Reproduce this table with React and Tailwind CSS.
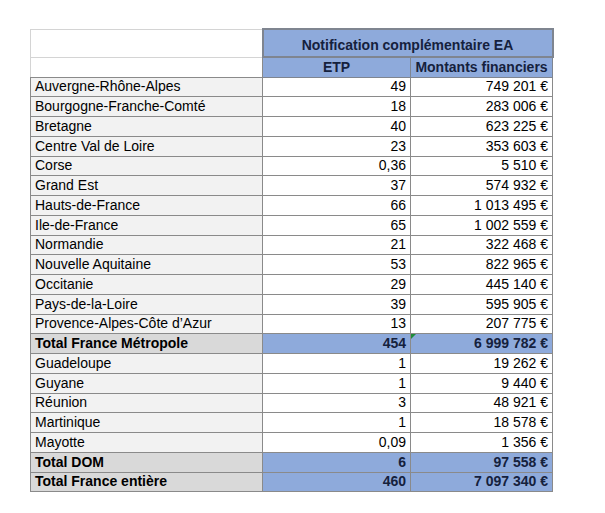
const ROWS = [
  ['Auvergne-Rhône-Alpes', '49', '749 201 €'],
  ['Bourgogne-Franche-Comté', '18', '283 006 €'],
  ['Bretagne', '40', '623 225 €'],
  ['Centre Val de Loire', '23', '353 603 €'],
  ['Corse', '0,36', '5 510 €'],
  ['Grand Est', '37', '574 932 €'],
  ['Hauts-de-France', '66', '1 013 495 €'],
  ['Ile-de-France', '65', '1 002 559 €'],
  ['Normandie', '21', '322 468 €'],
  ['Nouvelle Aquitaine', '53', '822 965 €'],
  ['Occitanie', '29', '445 140 €'],
  ['Pays-de-la-Loire', '39', '595 905 €'],
  ['Provence-Alpes-Côte d’Azur', '13', '207 775 €'],
  ['Total France Métropole', '454', '6 999 782 €', true],
  ['Guadeloupe', '1', '19 262 €'],
  ['Guyane', '1', '9 440 €'],
  ['Réunion', '3', '48 921 €'],
  ['Martinique', '1', '18 578 €'],
  ['Mayotte', '0,09', '1 356 €'],
  ['Total DOM', '6', '97 558 €', true],
  ['Total France entière', '460', '7 097 340 €', true],
];

export default function App() {
  return (
    <div className="w-[605px] h-[513px] bg-white pt-[28px] pl-[30px] font-['Liberation_Sans',Arial,sans-serif] text-[14px] text-black">
      <table className="border-collapse table-fixed w-[522px]">
        <colgroup>
          <col className="w-[232px]" />
          <col className="w-[148px]" />
          <col className="w-[142px]" />
        </colgroup>
        <thead>
          <tr className="h-[25px]">
            <td className="border border-[#d4d4d4] border-r-[#8a8a8a] bg-white" />
            <td colSpan={2} className="border-2 border-[#7f8590] bg-[#8eaadb] text-center font-bold text-[#15213d] pt-[5px]">
              Notification complémentaire EA
            </td>
          </tr>
          <tr className="h-[20px] leading-[18px]">
            <td className="border border-[#d4d4d4] border-r-[#8a8a8a] border-b-[#8a8a8a] bg-white" />
            <td className="border border-[#7f8590] bg-[#8eaadb] text-center font-bold text-[#15213d]">ETP</td>
            <td className="border border-[#7f8590] bg-[#8eaadb] text-center font-bold text-[#15213d]">Montants financiers</td>
          </tr>
        </thead>
        <tbody>
          {ROWS.map(([label, etp, amount, total], i) => (
            <tr key={label} className="h-[19.75px] leading-[17px]">
              <td className={`border border-[#8a8a8a] px-[4px] ${total ? 'bg-[#d9d9d9] font-bold' : 'bg-[#f2f2f2]'}`}>{label}</td>
              <td className={`border border-[#8a8a8a] px-[4px] text-right ${total ? 'bg-[#8eaadb] font-bold text-[#15213d]' : 'bg-white'}`}>{etp}</td>
              <td className={`relative border border-[#8a8a8a] px-[4px] text-right ${total ? 'bg-[#8eaadb] font-bold text-[#15213d]' : 'bg-white'}`}>
                {i === 13 && (
                  <span className="absolute left-0 top-0 w-0 h-0 border-t-[5px] border-r-[5px] border-t-[#1e8c3a] border-r-transparent" />
                )}
                {amount}
              </td>
            </tr>
          ))}
        </tbody>
      </table>
    </div>
  );
}
